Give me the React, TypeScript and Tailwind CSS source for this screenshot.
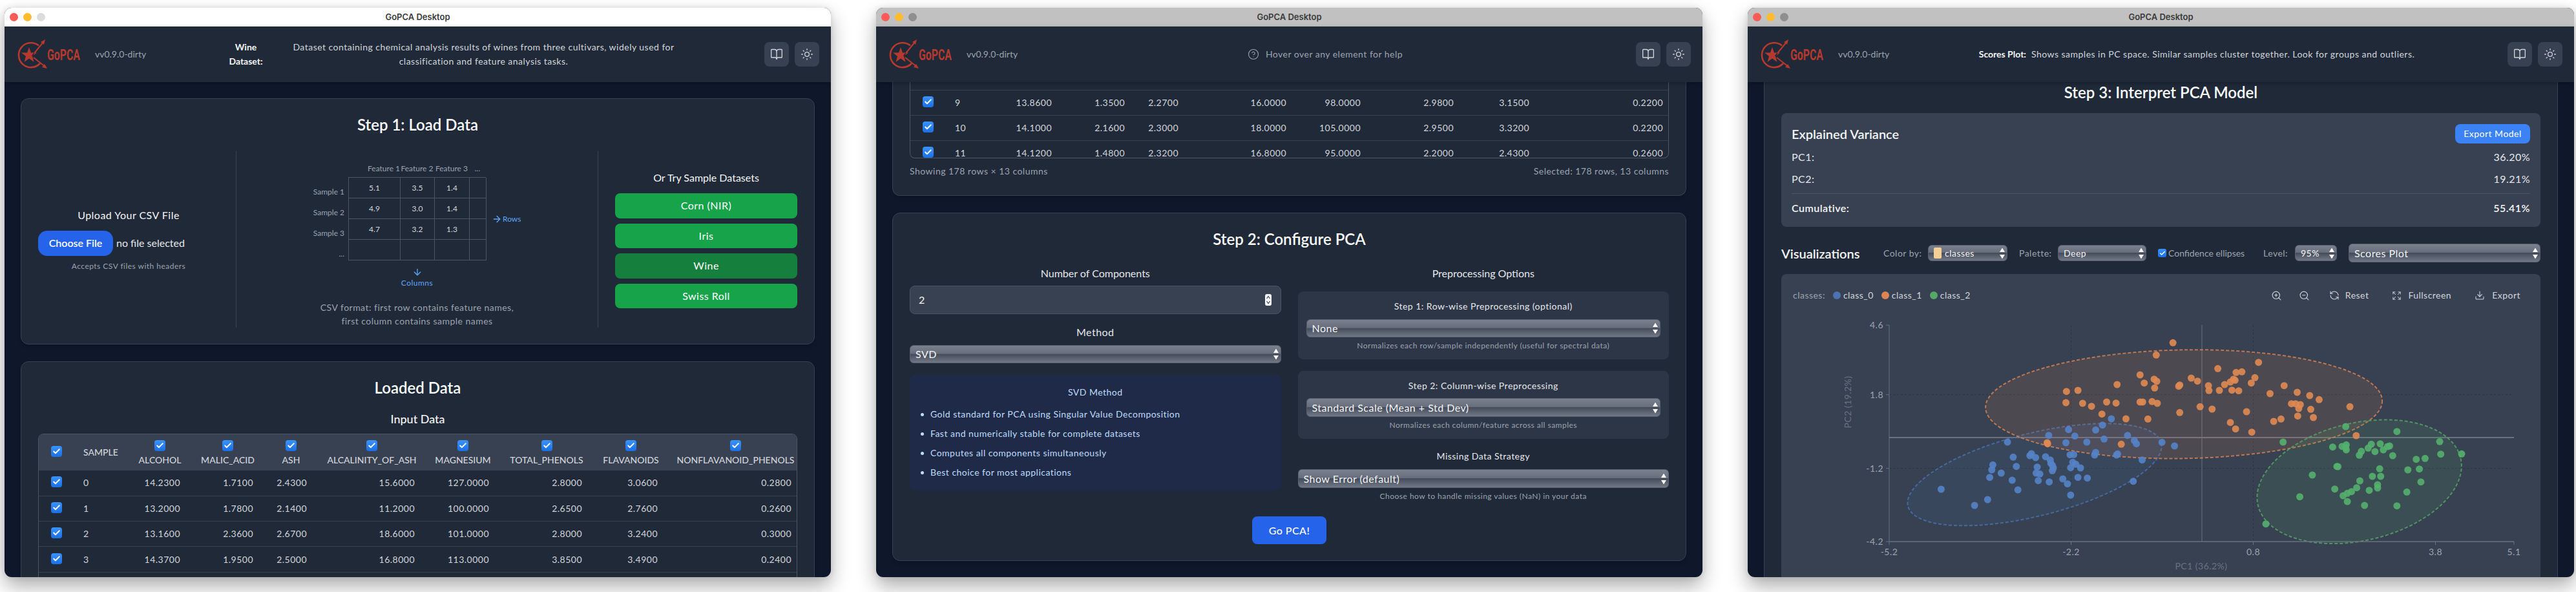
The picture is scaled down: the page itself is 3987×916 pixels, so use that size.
import React from 'react';
import { ArrowDown, ArrowRight, BookOpen, Check, CircleHelp, Download, Expand, RefreshCcw, Sun, ZoomIn, ZoomOut } from 'lucide-react';

const featureNames = ['ALCOHOL', 'MALIC_ACID', 'ASH', 'ALCALINITY_OF_ASH', 'MAGNESIUM', 'TOTAL_PHENOLS', 'FLAVANOIDS', 'NONFLAVANOID_PHENOLS'];

const topRows = [
  ['0', '14.2300', '1.7100', '2.4300', '15.6000', '127.0000', '2.8000', '3.0600', '0.2800'],
  ['1', '13.2000', '1.7800', '2.1400', '11.2000', '100.0000', '2.6500', '2.7600', '0.2600'],
  ['2', '13.1600', '2.3600', '2.6700', '18.6000', '101.0000', '2.8000', '3.2400', '0.3000'],
  ['3', '14.3700', '1.9500', '2.5000', '16.8000', '113.0000', '3.8500', '3.4900', '0.2400'],
];

const scrolledRows = [
  ['9', '13.8600', '1.3500', '2.2700', '16.0000', '98.0000', '2.9800', '3.1500', '0.2200'],
  ['10', '14.1000', '2.1600', '2.3000', '18.0000', '105.0000', '2.9500', '3.3200', '0.2200'],
  ['11', '14.1200', '1.4800', '2.3200', '16.8000', '95.0000', '2.2000', '2.4300', '0.2600'],
];

const svdNotes = [
  'Gold standard for PCA using Singular Value Decomposition',
  'Fast and numerically stable for complete datasets',
  'Computes all components simultaneously',
  'Best choice for most applications',
];

// scatter positions, chart pixels are derived in toChart below
const orangePts = [[796,331],[764,388],[960,422],[882,451],[917,469],[928,466],[733,480],[760,500],[765,510],[831,495],[843,509],[953,493],[912,500],[906,513],[915,505],[946,518],[689,525],[741,518],[761,541],[807,533],[809,527],[864,530],[865,553],[895,525],[885,552],[909,551],[922,554],[1009,530],[982,567],[1034,561],[1058,576],[1076,595],[592,557],[614,552],[591,609],[623,612],[640,626],[669,606],[687,611],[733,606],[738,606],[756,604],[766,612],[848,628],[871,639],[809,655],[937,651],[1135,628],[1023,614],[1031,614],[1040,618],[1037,636],[1060,640],[1035,671],[1065,678],[1003,685],[989,696],[906,701],[916,731],[947,746],[1147,762],[660,662],[706,684],[748,685],[555,795],[556,800],[697,802]];
const bluePts = [[678,684],[661,713],[648,736],[596,734],[558,761],[608,764],[709,761],[664,778],[722,785],[726,800],[775,793],[799,810],[479,792],[591,795],[631,792],[648,840],[646,852],[690,847],[688,852],[599,851],[606,850],[522,855],[525,846],[533,864],[552,860],[490,862],[561,875],[562,890],[604,886],[610,895],[619,912],[600,911],[565,900],[567,912],[565,925],[536,908],[451,898],[449,921],[496,905],[467,936],[445,956],[534,936],[541,940],[488,969],[538,971],[559,977],[585,963],[614,956],[632,959],[594,986],[499,1014],[600,1038],[737,875],[720,974],[352,1011],[441,1059],[416,1086]];
const greenPts = [[1007,792],[1127,720],[1225,743],[1307,790],[1349,847],[1309,848],[1102,815],[1120,812],[1128,805],[1127,818],[1128,828],[1176,802],[1170,820],[1193,800],[1199,828],[1183,836],[1207,813],[1211,810],[1157,835],[1153,853],[1217,855],[1262,872],[1279,868],[1110,905],[1112,906],[1192,916],[1246,921],[1268,917],[1063,945],[1194,951],[1178,951],[1154,972],[1271,977],[1188,990],[1188,1005],[1148,1004],[1106,1010],[1172,1016],[1244,1024],[1138,1022],[1130,1030],[1122,1041],[1039,1046],[1130,1068],[1163,1086],[1225,1088],[974,1172]];

const toChart = ([x, y]: number[]) => [x * 0.808 - 37, y / 3 - 47];

const Logo = () => (
  <svg width="100" height="46" viewBox="0 0 100 46" fill="none" className="shrink-0">
    <path d="M33 9.5A19 19 0 1 0 35 37" stroke="#b5392f" strokeWidth="2.6" />
    <polygon points="18,12 21,20.5 30,20.5 23,26 25.5,35 18,29.5 10.5,35 13,26 6,20.5 15,20.5" fill="#b5392f" />
    <path d="M23 25L41 3M25 28L44 43M23 25L20 29" stroke="#b5392f" strokeWidth="2" />
    <path d="M26 21L23 25L28 25" stroke="#1f2937" strokeWidth="1.4" />
    <polygon points="43,0 41,8 36,4" fill="#b5392f" />
    <polygon points="46,45 38,43 42,38" fill="#b5392f" />
    <text transform="translate(46 32) scale(0.66 1)" fontFamily="Roboto, sans-serif" fontWeight="700" fontSize="24" letterSpacing="0" fill="#b5392f">GoPCA</text>
  </svg>
);

const TickBox = ({ small }: { small?: boolean }) => (
  <span className={`inline-flex shrink-0 items-center justify-center bg-gradient-to-b from-[#3a93fb] to-[#1a6fe6] ${small ? 'h-[13px] w-[13px] rounded-[3px]' : 'h-[17px] w-[17px] rounded-[4px]'}`}>
    <Check size={small ? 10 : 13} strokeWidth={3.5} className="text-white" />
  </span>
);

const NativeSelect = ({ value, className, text, tag }: { value: string; className: string; text?: string; tag?: boolean }) => (
  <div className={`relative flex items-center rounded-[6px] border border-[#566072] bg-[linear-gradient(180deg,#7a808c_0%,#676d7b_47%,#444c5b_50%,#727885_100%)] pl-2 pr-5 text-[#f3f4f6] ${text ?? 'text-base'} ${className}`}>
    {tag && <span className="mr-[5px] h-[17px] w-[12px] rounded-[2px] bg-[#f6cf97]" />}
    <span className="truncate">{value}</span>
    <svg width="8" height="17" viewBox="0 0 8 17" className="absolute right-[3px] top-1/2 -translate-y-1/2 fill-white">
      <polygon points="4,0 8,6.5 0,6.5" />
      <polygon points="4,17 8,10.5 0,10.5" />
    </svg>
  </div>
);

const DataTable = ({ rows, withHead, topStub }: { rows: string[][]; withHead?: boolean; topStub?: boolean }) => (
  <table className="w-[1182px] table-fixed border-collapse text-sm text-[#d1d5db]">
    <colgroup>
      <col className="w-[55px]" />
      <col className="w-[84px]" />
      <col className="w-[97px]" />
      <col className="w-[113px]" />
      <col className="w-[83px]" />
      <col className="w-[167px]" />
      <col className="w-[115px]" />
      <col className="w-[144px]" />
      <col className="w-[117px]" />
      <col className="w-[207px]" />
    </colgroup>
    {withHead && (
      <thead>
        <tr className="h-[56px] bg-[#374151] tracking-normal">
          <th className="text-center align-middle"><TickBox /></th>
          <th className="pl-[14px] text-left font-medium">SAMPLE</th>
          {featureNames.map(name => (
            <th key={name} className="whitespace-nowrap text-center font-medium">
              <div className="flex flex-col items-center gap-[5px]">
                <TickBox />
                <span className="leading-[17px]">{name}</span>
              </div>
            </th>
          ))}
        </tr>
      </thead>
    )}
    <tbody>
      {topStub && (
        <tr className="h-[12px] border-b border-[#374151]">
          <td colSpan={10} />
        </tr>
      )}
      {rows.map(row => (
        <tr key={row[0]} className="h-[39.3px] border-b border-[#374151]">
          <td className="text-center align-middle"><TickBox /></td>
          <td className="pl-[14px]">{row[0]}</td>
          {row.slice(1).map((cell, i) => (
            <td key={i} className="pr-[17px] text-right">{cell}</td>
          ))}
        </tr>
      ))}
    </tbody>
  </table>
);

const Window = ({ focused, help, children }: { focused?: boolean; help: React.ReactNode; children: React.ReactNode }) => (
  <div className="flex h-[881px] w-[1279px] shrink-0 flex-col overflow-hidden rounded-t-[11px] rounded-b-[11px] bg-[#0f172a] shadow-[0_14px_30px_rgba(0,0,0,0.32),0_0_10px_rgba(0,0,0,0.1)]">
    <div className={`relative flex h-[29px] shrink-0 items-center justify-center ${focused ? 'bg-white' : 'bg-[#c1c1c1]'}`}>
      <div className="absolute left-[8px] top-[8px] flex gap-[8px]">
        <span className="h-[13px] w-[13px] rounded-full bg-[#fb5b57]" />
        <span className="h-[13px] w-[13px] rounded-full bg-[#fdbc2f]" />
        <span className={`h-[13px] w-[13px] rounded-full ${focused ? 'bg-[#dcdcdc]' : 'bg-[#8f8f8f]'}`} />
      </div>
      <span className="[font-family:Inter,sans-serif] text-[13px] font-semibold tracking-normal text-[#3a3a3a]">GoPCA Desktop</span>
    </div>
    <header className="relative z-10 flex h-[86px] shrink-0 items-center bg-[#1f2937] pl-[20px] pr-[18px] shadow-[0_2px_6px_rgba(0,0,0,0.25)]">
      <Logo />
      <span className="ml-[20px] w-[74px] whitespace-nowrap text-sm tracking-normal text-[#9ca3af]">vv0.9.0-dirty</span>
      <div className="flex flex-1 items-center justify-center">{help}</div>
      <div className="flex gap-[9px]">
        <button className="flex h-[38px] w-[38px] items-center justify-center rounded-lg bg-[#374151] text-[#d1d5db]"><BookOpen size={20} strokeWidth={1.6} /></button>
        <button className="flex h-[38px] w-[38px] items-center justify-center rounded-lg bg-[#374151] text-[#d1d5db]"><Sun size={20} strokeWidth={1.6} /></button>
      </div>
    </header>
    <div className="flex min-h-0 flex-1 flex-col overflow-hidden px-[25px]">{children}</div>
  </div>
);

const Card = ({ className, children }: { className?: string; children: React.ReactNode }) => (
  <section className={`shrink-0 rounded-xl border border-[#374151] bg-[#1f2937] shadow-md ${className ?? ''}`}>{children}</section>
);

const FileFormat = () => (
  <div className="flex flex-col items-center border-x border-[#374151] pt-[21px]">
    <div className="grid grid-cols-[1fr_213px_1fr] gap-x-[6px] text-xs tracking-normal text-[#9ca3af]">
      <span />
      <div className="grid grid-cols-[80px_53px_54px_26px] pb-[7px] leading-[13px] whitespace-nowrap">
        <span className="text-right">Feature 1</span>
        <span className="text-center">Feature 2</span>
        <span className="text-center">Feature 3</span>
        <span className="text-center">...</span>
      </div>
      <span />
      <div className="flex flex-col items-end">
        {['Sample 1', 'Sample 2', 'Sample 3', '...'].map(s => (
          <span key={s} className="h-[32px] whitespace-nowrap pt-[16px] leading-[14px]">{s}</span>
        ))}
      </div>
      <div className="grid grid-cols-[80px_53px_54px_26px] border-t border-l border-[#4b5563] text-[#d1d5db]">
        {['5.1', '3.5', '1.4', '', '4.9', '3.0', '1.4', '', '4.7', '3.2', '1.3', '', '', '', '', ''].map((v, i) => (
          <span key={i} className="flex h-[32px] items-center justify-center border-r border-b border-[#4b5563]">{v}</span>
        ))}
      </div>
      <div className="flex items-center gap-[1px] pl-[3px] text-[#60a5fa]">
        <ArrowRight size={16} />
        <span>Rows</span>
      </div>
    </div>
    <ArrowDown size={16} className="mt-[10px] text-[#60a5fa]" />
    <span className="mt-[1px] text-xs text-[#60a5fa]">Columns</span>
    <p className="mt-[19px] text-center text-sm leading-[21px] text-[#9ca3af]">
      CSV format: first row contains feature names,
      <br />
      first column contains sample names
    </p>
  </div>
);

const ScoresPlot = () => {
  const ellipses = [
    { cx: 531, cy: 943, rx: 202, ry: 64, a: -14, c: '#4c72b0' },
    { cx: 817, cy: 616, rx: 307, ry: 84, a: -1, c: '#dd8452' },
    { cx: 1153, cy: 976, rx: 161, ry: 91, a: -13, c: '#55a868' },
  ];
  const ticksX = [167, 448.5, 730.5, 1012.5, 1134];
  const labelsX = ['-5.2', '-2.2', '0.8', '3.8', '5.1'];
  const ticksY = [36, 143.7, 257.7, 371];
  const labelsY = ['4.6', '1.8', '-1.2', '-4.2'];
  return (
    <svg width="1173" height="426" viewBox="0 0 1173 426" className="block">
      {/* dashed grid */}
      {[448.5, 730.5].map(x => <line key={x} x1={x} x2={x} y1="36" y2="371" stroke="#1f2937" strokeOpacity="0.55" strokeDasharray="3 3" />)}
      {[143.7, 257.7].map(y => <line key={y} x1="167" x2="1134" y1={y} y2={y} stroke="#1f2937" strokeOpacity="0.55" strokeDasharray="3 3" />)}
      <line x1="651" x2="651" y1="36" y2="371" stroke="#6b7280" />
      <line x1="167" x2="1134" y1="210" y2="210" stroke="#6b7280" strokeWidth="2" />
      {ellipses.map(e => {
        const [cx, cy] = toChart([e.cx, e.cy]);
        return (
          <ellipse key={e.c} cx={cx} cy={cy} rx={e.rx} ry={e.ry} transform={`rotate(${e.a} ${cx} ${cy})`} fill={e.c} fillOpacity="0.13" stroke={e.c} strokeOpacity="0.8" strokeWidth="2" strokeDasharray="5 3" />
        );
      })}
      {[{ pts: bluePts, c: '#5583c8' }, { pts: orangePts, c: '#e08a52' }, { pts: greenPts, c: '#55b06e' }].map(group =>
        group.pts.map((p, i) => {
          const [x, y] = toChart(p);
          return <circle key={`${group.c}${i}`} cx={x} cy={y} r="5.5" fill={group.c} fillOpacity="0.9" />;
        })
      )}
      {/* axes */}
      <line x1="167" x2="167" y1="36" y2="371" stroke="#6b7280" />
      <line x1="167" x2="1134" y1="371" y2="371" stroke="#6b7280" strokeWidth="1.5" />
      <g fontFamily="Lato, sans-serif" fontSize="14" fill="#9ca3af">
        {ticksX.map((x, i) => (
          <g key={x}>
            <line x1={x} x2={x} y1="371" y2="376" stroke="#6b7280" />
            <text x={x} y="392" textAnchor="middle">{labelsX[i]}</text>
          </g>
        ))}
        {ticksY.map((y, i) => (
          <g key={y}>
            <line x1="162" x2="167" y1={y} y2={y} stroke="#6b7280" />
            <text x="158" y={y + 5} textAnchor="end">{labelsY[i]}</text>
          </g>
        ))}
      </g>
      <text x="650" y="414" textAnchor="middle" fontFamily="Lato, sans-serif" fontSize="14" fill="#6b7280">PC1 (36.2%)</text>
      <text x="108" y="155" textAnchor="middle" fontFamily="Lato, sans-serif" fontSize="14" fill="#6b7280" transform="rotate(-90 108 155)">PC2 (19.2%)</text>
    </svg>
  );
};

export default function App() {
  return (
    <div className="flex h-[916px] w-[3987px] gap-[70px] overflow-hidden bg-white pl-[7px] pt-[12px] [font-family:Lato,sans-serif] tracking-[0.03em]">
      {/* load data window */}
      <Window
        focused
        help={
          <div className="flex items-center gap-[33px] text-sm leading-[22px]">
            <span className="w-[60px] text-center font-bold tracking-normal text-[#f3f4f6]">Wine Dataset:</span>
            <p className="w-[610px] text-center text-[#d1d5db]">Dataset containing chemical analysis results of wines from three cultivars, widely used for classification and feature analysis tasks.</p>
          </div>
        }
      >
        <Card className="mt-[25px] h-[381px] px-0 pt-[24px]">
          <h2 className="text-center text-2xl font-semibold leading-8 tracking-normal text-[#f9fafb]">Step 1: Load Data</h2>
          <div className="mt-[24px] grid h-[274px] grid-cols-[332px_561px_1fr]">
            <div className="flex flex-col items-center justify-center px-[26px]">
              <h3 className="text-base text-[#f3f4f6]">Upload Your CSV File</h3>
              <div className="mt-[12px] flex w-full items-center gap-[5px]">
                <span className="flex h-[39px] w-[116px] items-center justify-center rounded-[14px] bg-[#2563eb] text-base font-semibold tracking-normal text-white">Choose File</span>
                <span className="text-base tracking-normal text-[#e5e7eb]">no file selected</span>
              </div>
              <p className="mt-[8px] text-xs text-[#9ca3af]">Accepts CSV files with headers</p>
            </div>
            <FileFormat />
            <div className="flex flex-col items-center justify-center px-[26px]">
              <h3 className="text-base tracking-normal text-[#f3f4f6]">Or Try Sample Datasets</h3>
              <div className="mt-[12px] flex w-full flex-col gap-[8px]">
                {['Corn (NIR)', 'Iris', 'Wine', 'Swiss Roll'].map(name => (
                  <button key={name} className={`h-[38.5px] rounded-lg text-base font-normal text-white ${name === 'Wine' ? 'bg-[#15803d]' : 'bg-[#16a34a]'}`}>{name}</button>
                ))}
              </div>
            </div>
          </div>
        </Card>
        <Card className="mt-[26px] px-[26px] pt-[24px]">
          <h2 className="text-center text-2xl font-semibold leading-8 tracking-normal text-[#f9fafb]">Loaded Data</h2>
          <h3 className="mt-[18px] text-center text-lg font-medium leading-7 tracking-normal text-[#f3f4f6]">Input Data</h3>
          <div className="mt-[9px] h-[400px] overflow-hidden rounded-lg border border-[#4b5563]">
            <DataTable withHead rows={topRows} />
          </div>
        </Card>
      </Window>

      {/* configure window */}
      <Window
        help={
          <div className="flex items-center gap-[10px] text-sm text-[#9ca3af]">
            <CircleHelp size={18} strokeWidth={1.5} />
            <span>Hover over any element for help</span>
          </div>
        }
      >
        <Card className="rounded-t-none border-t-0 px-[26px] pb-[27px]">
          <div className="h-[118px] overflow-hidden rounded-b-lg border-x border-b border-[#4b5563]">
            <DataTable topStub rows={scrolledRows} />
          </div>
          <div className="mt-[10px] flex justify-between text-sm leading-[20px] text-[#9ca3af]">
            <span>Showing 178 rows × 13 columns</span>
            <span>Selected: 178 rows, 13 columns</span>
          </div>
        </Card>
        <Card className="mt-[26px] h-[539px] px-[26px] pt-[24px]">
          <h2 className="text-center text-2xl font-semibold leading-8 tracking-normal text-[#f9fafb]">Step 2: Configure PCA</h2>
          <div className="mt-[25px] grid grid-cols-2 gap-[26px]">
            <div className="flex flex-col">
              <label className="text-center text-base leading-[24px] tracking-normal text-[#e5e7eb]">Number of Components</label>
              <div className="mt-[7px] flex h-[44px] items-center justify-between rounded-lg border border-[#4b5563] bg-[#374151] pl-[13px] pr-[14px] text-base text-[#f3f4f6]">
                <span>2</span>
                <svg width="10" height="18" viewBox="0 0 10 18">
                  <rect width="10" height="18" rx="3" fill="#f3f4f6" />
                  <path d="M2.5 7L5 3.5L7.5 7M2.5 11L5 14.5L7.5 11" fill="none" stroke="#374151" strokeWidth="1.2" />
                </svg>
              </div>
              <label className="mt-[16px] text-center text-base leading-[24px] text-[#e5e7eb]">Method</label>
              <NativeSelect value="SVD" className="mt-[8px] h-[28px]" />
              <div className="mt-[18px] flex h-[179px] flex-col rounded-lg bg-[#1e2a47] px-[17px] pt-[17px]">
                <h4 className="text-center text-sm leading-5 text-[#bfdbfe]">SVD Method</h4>
                <ul className="mt-[14px] flex flex-col gap-[10px] text-sm leading-5 text-[#bfdbfe]">
                  {svdNotes.map(note => (
                    <li key={note} className="flex items-center gap-[10px]">
                      <span className="h-[5px] w-[5px] rounded-full bg-[#bfdbfe]" />
                      {note}
                    </li>
                  ))}
                </ul>
              </div>
            </div>
            <div className="flex flex-col">
              <label className="text-center text-base leading-[24px] tracking-normal text-[#e5e7eb]">Preprocessing Options</label>
              <div className="mt-[16px] flex h-[105px] flex-col rounded-lg bg-[#2c3646] px-[13px] pt-[13px]">
                <span className="text-center text-sm leading-5 text-[#e5e7eb]">Step 1: Row-wise Preprocessing (optional)</span>
                <NativeSelect value="None" className="mt-[10px] h-[28px]" />
                <span className="mt-[5px] text-center text-xs leading-4 text-[#9ca3af]">Normalizes each row/sample independently (useful for spectral data)</span>
              </div>
              <div className="mt-[18px] flex h-[105px] flex-col rounded-lg bg-[#2c3646] px-[13px] pt-[13px]">
                <span className="text-center text-sm leading-5 text-[#e5e7eb]">Step 2: Column-wise Preprocessing</span>
                <NativeSelect value="Standard Scale (Mean + Std Dev)" className="mt-[9px] h-[29px]" />
                <span className="mt-[5px] text-center text-xs leading-4 text-[#9ca3af]">Normalizes each column/feature across all samples</span>
              </div>
              <span className="mt-[17px] text-center text-sm leading-5 text-[#e5e7eb]">Missing Data Strategy</span>
              <NativeSelect value="Show Error (default)" className="mt-[10px] h-[29px]" />
              <span className="mt-[5px] text-center text-xs leading-4 text-[#9ca3af]">Choose how to handle missing values (NaN) in your data</span>
            </div>
          </div>
          <div className="mt-[23px] flex justify-center">
            <button className="h-[43px] w-[115px] rounded-lg bg-[#2563eb] text-base font-medium text-white">Go PCA!</button>
          </div>
        </Card>
      </Window>

      {/* results window */}
      <Window
        help={
          <div className="flex items-center gap-[8px] text-sm">
            <span className="font-bold tracking-normal text-[#f3f4f6]">Scores Plot:</span>
            <span className="text-[#d1d5db]">Shows samples in PC space. Similar samples cluster together. Look for groups and outliers.</span>
          </div>
        }
      >
        <section className="flex flex-1 flex-col border-x border-[#374151] bg-[#1f2937] px-[26px]">
          <h2 className="text-center text-2xl font-semibold leading-8 tracking-normal text-[#f9fafb]">Step 3: Interpret PCA Model</h2>
          <div className="mt-[16px] h-[176px] shrink-0 rounded-lg bg-[#374151] px-[16px] pt-[16px] text-base text-[#e5e7eb]">
            <div className="flex h-[32px] items-center justify-between">
              <h3 className="text-xl font-semibold tracking-normal text-[#f3f4f6]">Explained Variance</h3>
              <button className="h-[30px] w-[116px] rounded-lg bg-[#3b82f6] text-sm text-white">Export Model</button>
            </div>
            <div className="mt-[3px] flex h-[34px] items-center justify-between"><span>PC1:</span><span>36.20%</span></div>
            <div className="flex h-[34px] items-center justify-between"><span>PC2:</span><span>19.21%</span></div>
            <div className="mt-[5px] flex h-[44px] items-center justify-between border-t border-[#4b5563] pt-[0px] font-semibold text-[#f3f4f6]"><span>Cumulative:</span><span>55.41%</span></div>
          </div>
          <div className="mt-[26px] flex h-[29px] shrink-0 items-center text-sm text-[#9ca3af]">
            <h3 className="w-[127px] text-xl font-semibold tracking-normal text-[#f3f4f6]">Visualizations</h3>
            <span className="ml-[31px] w-[60px]">Color by:</span>
            <NativeSelect tag value="classes" text="text-sm" className="ml-[9px] h-[25px] w-[123px]" />
            <span className="ml-[18px] w-[51px]">Palette:</span>
            <NativeSelect value="Deep" text="text-sm" className="ml-[9px] h-[25px] w-[137px]" />
            <span className="ml-[18px] flex w-[146px] items-center gap-[3px] tracking-normal"><TickBox small />Confidence ellipses</span>
            <span className="ml-[17px] w-[40px]">Level:</span>
            <NativeSelect value="95%" text="text-sm" className="ml-[9px] h-[25px] w-[65px]" />
            <NativeSelect value="Scores Plot" text="text-base" className="ml-[18px] h-[29px] flex-1" />
          </div>
          <div className="mt-[18px] flex-1 rounded-t-lg bg-[#374151]">
            <div className="flex h-[43px] items-end justify-between pb-0 pl-[18px] pr-[31px] text-sm">
              <div className="flex h-[20px] items-center gap-[6px] text-[#d1d5db]">
                <span className="mr-[6px] text-[#9ca3af]">classes:</span>
                {[['class_0', 'bg-[#4c72b0]'], ['class_1', 'bg-[#dd8452]'], ['class_2', 'bg-[#55a868]']].map(([name, dot]) => (
                  <span key={name} className="mr-[6px] flex items-center gap-[4px]">
                    <span className={`h-[12px] w-[12px] rounded-full ${dot}`} />
                    {name}
                  </span>
                ))}
              </div>
              <div className="flex h-[20px] items-center text-[#d1d5db]">
                <ZoomIn size={17} strokeWidth={1.6} />
                <ZoomOut size={17} strokeWidth={1.6} className="ml-[26px]" />
                <RefreshCcw size={16} strokeWidth={1.6} className="ml-[30px]" />
                <span className="ml-[9px]">Reset</span>
                <Expand size={15} strokeWidth={1.6} className="ml-[36px]" />
                <span className="ml-[10px]">Fullscreen</span>
                <Download size={16} strokeWidth={1.6} className="ml-[36px]" />
                <span className="ml-[11px]">Export</span>
              </div>
            </div>
            <ScoresPlot />
          </div>
        </section>
      </Window>
    </div>
  );
}
